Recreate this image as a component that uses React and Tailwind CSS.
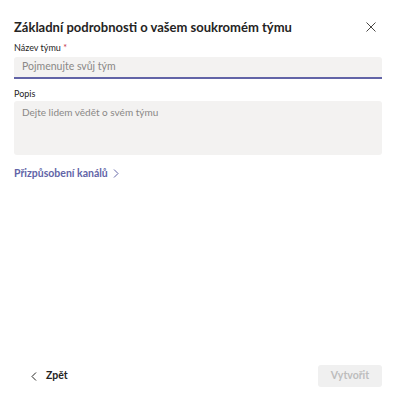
import React from 'react';

const font = { fontFamily: 'Lato, "Noto Sans", sans-serif' };

const App = () => {
  return (
    <div className="w-[396px] h-[403px] bg-white flex flex-col px-[14px] text-[#252423]" style={font}>
      <div className="flex items-center justify-between pt-[17px] h-[37px]">
        <h1 className="text-[13px] font-bold leading-[20px]">Základní podrobnosti o vašem soukromém týmu</h1>
        <svg width="10" height="10" viewBox="0 0 10 10" className="mr-[6px]">
          <path d="M0.5 0.5 L9.5 9.5 M9.5 0.5 L0.5 9.5" stroke="#484644" strokeWidth="1" />
        </svg>
      </div>

      <label className="text-[9px] leading-[12px] mt-[5px] text-[#252423]">
        Název týmu <span className="text-[#c4314b]">*</span>
      </label>
      <div className="mt-[3px] h-[22px] bg-[#f3f2f1] rounded-t-[3px] border-b-2 border-[#6264a7] flex items-center px-[8px]">
        <span className="text-[10.5px] text-[#8a8886]">Pojmenujte svůj tým</span>
      </div>

      <label className="text-[9px] leading-[12px] mt-[9px]">Popis</label>
      <div className="mt-[1px] h-[54px] bg-[#f3f2f1] rounded-[3px] px-[8px] pt-[4px] text-[10px] leading-[14px] text-[#8a8886]">
        Dejte lidem vědět o svém týmu
      </div>

      <div className="mt-[11px] flex items-center gap-[5px] text-[#6264a7] text-[10.5px] font-bold">
        <span>Přizpůsobení kanálů</span>
        <svg width="6" height="9" viewBox="0 0 6 9">
          <path d="M1 0.5 L5 4.5 L1 8.5" stroke="#6264a7" strokeWidth="1" fill="none" />
        </svg>
      </div>

      <div className="flex-1" />

      <div className="flex items-center justify-between h-[22px] mb-[16px]">
        <div className="flex items-center gap-[9px] pl-[17px] text-[10.5px] font-bold">
          <svg width="6" height="9" viewBox="0 0 6 9">
            <path d="M5 0.5 L1 4.5 L5 8.5" stroke="#252423" strokeWidth="1" fill="none" />
          </svg>
          <span>Zpět</span>
        </div>
        <div className="w-[64px] h-[22px] bg-[#f0f0f0] rounded-[3px] flex items-center justify-center text-[10.5px] font-bold text-[#bdbdbd]">
          Vytvořit
        </div>
      </div>
    </div>
  );
};

export default App;
